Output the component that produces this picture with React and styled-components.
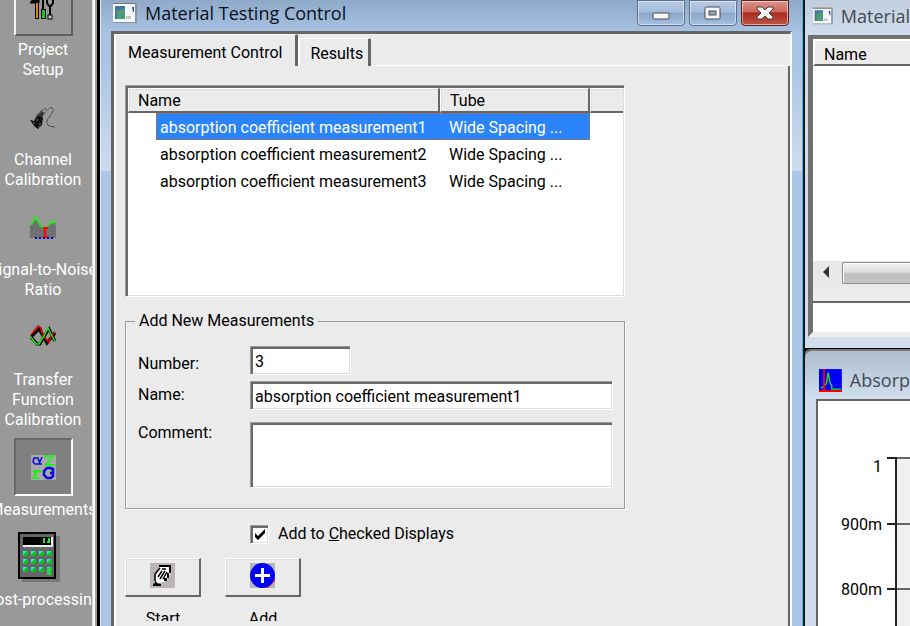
import React, { useState } from "react";
import styled, { createGlobalStyle, css } from "styled-components";

const Global = createGlobalStyle`
  * { box-sizing: border-box; }
  body { margin: 0; overflow: hidden; }
  body, button, input, textarea, table {
    font-family: Roboto, "Liberation Sans", sans-serif;
    font-size: 16px;
    line-height: 20px;
    color: #000;
  }
`;

const sunken = css`
  border: 1px solid;
  border-color: #9a9a9a #fff #fff #9a9a9a;
  box-shadow: inset 2px 2px 0 #696969, inset -1px -1px 0 #dedede;
`;

const Desktop = styled.div`
  display: grid;
  grid-template-columns: 100px minmax(0, 47fr) minmax(0, 7fr);
  height: 100vh;
  overflow: hidden;
  background: #000;
`;

/* Navigation bar */
const Sidebar = styled.nav`
  display: flex;
  flex-direction: column;
  gap: 8px;
  min-height: 0;
  overflow: hidden;
  background: #999;
  border: solid transparent;
  border-width: 0 8px 0 0;
  border-image: linear-gradient(to left, #000 0 3px, #a0a0a0 3px 5px, #fff 5px 7px, #d8d8d8 7px) 0 8 0 0;
`;

const NavItem = styled.button`
  display: flex;
  flex: none;
  flex-direction: column;
  align-items: center;
  gap: 4px;
  width: 86px;
  padding: 0;
  border: 0;
  background: none;
  color: #fff;
  &:first-child { margin-top: -22px; }
`;

const NavIcon = styled.span`
  display: grid;
  place-items: center;
  width: 59px;
  height: 58px;
  border: 2px solid transparent;
  ${(p) => p.$state === "raised" && css`
    border-color: #f4f4f4 #606060 #606060 #f4f4f4;
  `}
  ${(p) => p.$state === "pressed" && css`
    background: #808080;
    border-color: #686868 #fafafa #fafafa #686868;
  `}
`;

const NavLabel = styled.span`
  white-space: pre;
  text-align: center;
`;

/* Windows */
const MainWindow = styled.section`
  display: flex;
  flex-direction: column;
  min-width: 0;
  min-height: 0;
  padding: 0 11px 0 10px;
  border-left: 1px solid #dfe9f5;
  border-right: 2px solid #111;
  box-shadow: inset -1px 0 0 #25c4ec;
  background: linear-gradient(#8fa9c8 0, #a9c4e4 34px, #a9c4e4 60px, #cddcee 170px, #abc6e7 172px);
`;

const TitleBar = styled.header`
  display: flex;
  flex: none;
  align-items: center;
  gap: 8px;
  height: ${(p) => p.$height}px;
  padding: ${(p) => p.$pad};
  overflow: hidden;
`;

const Title = styled.h1`
  flex: 1;
  margin: 0;
  font: 400 18px/24px "Open Sans", "Noto Sans", sans-serif;
  color: ${(p) => (p.$inactive ? "#444a52" : "#0b1020")};
  white-space: nowrap;
`;

const CaptionButtons = styled.div`
  display: flex;
  align-self: flex-start;
  gap: 4px;
`;

const CaptionButton = styled.button`
  display: grid;
  place-items: center;
  width: 48px;
  height: 26px;
  padding: 0;
  border: 1px solid ${(p) => (p.$close ? "#5c2020" : "#5b6f8c")};
  border-radius: 0 0 4px 4px;
  box-shadow: inset 0 0 0 1px rgba(255, 255, 255, 0.5);
  background: ${(p) => p.$close
    ? "linear-gradient(#dc958c 0, #cb665a 45%, #a82c1d 50%, #bd5547 100%)"
    : "linear-gradient(#b6c9e0 0, #a5bddb 45%, #8aa7cb 50%, #a5c0e0 100%)"};
`;

const Client = styled.div`
  display: flex;
  flex: 1;
  flex-direction: column;
  min-height: 0;
  overflow: hidden;
  background: #ebebeb;
  border: solid;
  border-width: 3px 2px 0 3px;
  border-color: #666 #fff #fff #666;
`;

const Tabs = styled.div`
  display: flex;
  flex: none;
  align-items: flex-end;
  height: 32px;
`;

const Tab = styled.button`
  align-self: ${(p) => (p.$active ? "stretch" : "flex-end")};
  height: ${(p) => (p.$active ? "auto" : "28px")};
  padding: ${(p) => (p.$active ? "4px 13px 0 12px" : "2px 5px 0 10px")};
  border: solid;
  border-width: 1px 3px 0 2px;
  border-color: #fff #666 #fff #fff;
  border-radius: 2px 2px 0 0;
  background: #ebebeb;
`;

const TabRule = styled.span`
  flex: 1;
  height: 1px;
  background: #fff;
`;

const TabPage = styled.div`
  display: flex;
  flex: 1;
  flex-direction: column;
  align-items: flex-start;
  min-height: 0;
  padding: 19px 16px 0 9px;
  border-left: 2px solid #fff;
  border-right: 2px solid #666;
`;

const ListBox = styled.div`
  ${sunken}
  width: 500px;
  max-width: 100%;
  height: 212px;
  flex: none;
  padding: 2px 1px 1px 2px;
  background: #fff;
`;

const Table = styled.table`
  width: 100%;
  table-layout: fixed;
  border-collapse: separate;
  border-spacing: 0;
`;

const NameCol = styled.col` width: 312px; `;
const TubeCol = styled.col` width: 150px; `;

const HeadCell = styled.th`
  height: 25px;
  padding: 1px 9px 0;
  text-align: left;
  font-weight: 400;
  background: #ebebeb;
  border: solid;
  border-width: 1px 2px 2px 1px;
  border-color: #fff #666 #666 #fff;
  box-shadow: inset 1px 1px 0 #ddd;
  &:last-child { border-right: 0; }
`;

const Cell = styled.td`
  height: 27px;
  padding: 0;
  white-space: nowrap;
`;

const NameText = styled.div`
  margin-left: 28px;
  padding: 4px 3px 1px;
  border: 1px dotted transparent;
  border-right: 0;
  ${(p) => p.$selected && css`
    color: #fff;
    background: #2c84fb;
    border-color: #c9641c;
  `}
`;

const TubeText = styled(NameText)`
  margin-left: 0;
  padding-left: 9px;
  border-left: 0;
  border-right: 1px dotted ${(p) => (p.$selected ? "#c9641c" : "transparent")};
`;

const Group = styled.fieldset`
  display: grid;
  grid-template-columns: 112px minmax(0, 1fr);
  align-items: start;
  row-gap: 6px;
  width: 500px;
  max-width: 100%;
  min-width: 0;
  flex: none;
  margin: 14px 0 0;
  padding: 15px 11px 20px 12px;
  border: 1px solid #999;
  box-shadow: inset 1px 0 0 #fff, 1px 1px 0 #fff;
`;

const Legend = styled.legend`
  margin-left: -3px;
  padding: 0 4px;
`;

const FieldLabel = styled.label`
  padding-top: ${(p) => p.$top}px;
`;

const TextInput = styled.input`
  ${sunken}
  width: ${(p) => (p.$short ? "101px" : "100%")};
  height: 29px;
  padding: 2px 4px 0;
  background: #fff;
  border-radius: 0;
  outline: none;
`;

const TextArea = styled.textarea`
  ${sunken}
  display: block;
  width: 100%;
  height: 66px;
  margin-top: 6px;
  padding: 4px;
  background: #fff;
  resize: none;
  outline: none;
`;

const CheckRow = styled.label`
  display: flex;
  flex: none;
  align-items: center;
  gap: 9px;
  margin: 15px 0 0 125px;
`;

const CheckBox = styled.input`
  ${sunken}
  appearance: none;
  display: grid;
  place-items: center;
  width: 19px;
  height: 19px;
  margin: 0;
  background: #fff;
  &:checked {
    background: #fff url("data:image/svg+xml,%3Csvg xmlns='http://www.w3.org/2000/svg' viewBox='0 0 19 19'%3E%3Cpath d='M5 8v4l3 3 7-7V4l-7 7z'/%3E%3C/svg%3E") center / 19px no-repeat;
  }
`;

const Actions = styled.div`
  display: flex;
  flex: none;
  gap: 24px;
  margin-top: 14px;
`;

const Action = styled.div`
  width: 76px;
  text-align: center;
`;

const ActionButton = styled.button`
  display: grid;
  place-items: center;
  width: 100%;
  height: 39px;
  padding: 0 0 3px;
  background: #ebebeb;
  border: solid;
  border-width: 1px 2px 2px 1px;
  border-color: #fff #666 #666 #fff;
  box-shadow: inset 1px 1px 0 #ddd;
`;

const ActionLabel = styled.div`
  height: 12px;
  margin-top: 12px;
  overflow: hidden;
`;

/* Right-hand windows */
const RightColumn = styled.div`
  display: flex;
  flex-direction: column;
  min-width: 0;
  min-height: 0;
  overflow: hidden;
`;

const DataWindow = styled.section`
  display: flex;
  flex-direction: column;
  flex: none;
  height: 348px;
  padding: 0 0 11px 3px;
  background: linear-gradient(#c0cedd 0, #cfdded 36px);
`;

const DataClient = styled.div`
  display: flex;
  flex: 1;
  flex-direction: column;
  background: #ebebeb;
  border: solid;
  border-width: 4px 0 5px 5px;
  border-color: #707070 #eee #eee #707070;
`;

const DataHead = styled.div`
  height: 27px;
  padding: 4px 9px 0;
  border: solid;
  border-width: 2px 0 2px 2px;
  border-color: #fff #666 #666 #fff;
`;

const DataBody = styled.div`
  flex: 1;
  background: #fff;
`;

const ScrollBar = styled.div`
  display: flex;
  height: 26px;
  background: #e8e8e8;
`;

const ScrollArrow = styled.button`
  display: grid;
  place-items: center;
  width: 29px;
  padding: 0 4px 4px 0;
  border: 0;
  background: none;
`;

const ScrollThumb = styled.div`
  flex: 1;
  margin: 1px 0 3px;
  border: 1px solid #8b8b8b;
  border-right: 0;
  border-radius: 2px 0 0 2px;
  box-shadow: inset 1px 1px 0 #fff;
  background: linear-gradient(#f4f4f4 0, #dedede 45%, #bfbfbf 55%, #c4c4c4 100%);
`;

const StatusInput = styled.input`
  width: 100%;
  height: 31px;
  margin-top: 14px;
  padding: 0 4px;
  border: 0;
  border-top: 2px solid #666;
  background: #fff;
`;

const PlotWindow = styled.section`
  display: flex;
  flex: 1;
  flex-direction: column;
  min-height: 0;
  margin-top: 3px;
  padding-left: 11px;
  border-radius: 6px 0 0 0;
  box-shadow: 0 0 0 2px #777;
  background: linear-gradient(#aebdcf 0, #cfdded 46px);
`;

const PlotClient = styled.div`
  flex: 1;
  min-height: 0;
  overflow: hidden;
  background: #fff;
  border: solid #666;
  border-width: 2px 0 0 2px;
`;

const AppIcon = () => (
  <svg width="24" height="20" viewBox="0 0 24 20" aria-hidden="true">
    <rect width="24" height="20" fill="#8b939b" />
    <rect y="1" width="22" height="18" fill="#f6f7f8" />
    <rect width="22" height="1" fill="#777" />
    <rect x="2" y="3" width="10" height="13" fill="#4676a0" />
    <path d="M4 14V8l8-3v11H4z" fill="#4d9d78" />
    <rect x="13" y="13" width="5" height="3" fill="#c4c8cc" />
    <path d="M19 4h2v5h-1z" fill="#28559b" />
  </svg>
);

const ToolsIcon = () => (
  <svg width="26" height="26" viewBox="0 0 26 26" aria-hidden="true">
    <path d="M0 9h9V5H3zM8 4v6" stroke="#000" fill="#000" />
    <rect x="5" y="9" width="4" height="16" fill="#000" />
    <rect x="6" y="9" width="2" height="15" fill="#d58b16" />
    <path d="M13 0v15" stroke="#000" strokeWidth="2" />
    <rect x="11" y="15" width="5" height="10" fill="#000" />
    <rect x="12" y="16" width="3" height="8" fill="#19c719" />
    <path d="M17 5v4l2 3h2l2-3V5M20 11v12" stroke="#000" strokeWidth="2" fill="none" />
    <rect x="18" y="21" width="4" height="4" fill="#ccc" stroke="#000" />
  </svg>
);

const MicIcon = () => (
  <svg width="26" height="26" viewBox="0 -3 26 26" aria-hidden="true">
    <path d="M0 13l4 1 2-4 4-3 3 4-1 7-4 4-3-2-3-4z" fill="#111" />
    <path d="M3 16h2m1-3h2m1 4h2m-3 3h2" stroke="#777" />
    <path d="M6 9l5-5 5-3M13 8c4-5 6-8 9-7s0 5-2 8c-4 5-4 8-1 10l6 1" fill="none" stroke="#444" strokeDasharray="4 1" />
    <path d="M8 8l4-4 2 2-2 5z" fill="#333" />
  </svg>
);

const NoiseIcon = () => (
  <svg width="26" height="26" viewBox="0 -1 26 26" aria-hidden="true">
    <path d="M0 9h2l4-5 5 6 4 3 4-4 2-1h5v15H0z" fill="#707070" />
    <path d="M0 9h2l1-3 2-1V1l3 6 2 1v3l3 1v1h4l1-3 3-2 1-3v3l4-1v3" fill="none" stroke="#23ef16" strokeWidth="1.5" />
    <path d="M13 13h5M15 13v9M13 22h5" stroke="#f00" strokeWidth="2" />
    <path d="M5 23h20" stroke="#0000d0" strokeWidth="2" strokeDasharray="2 2" />
  </svg>
);

const TransferIcon = () => (
  <svg width="26" height="26" viewBox="0 0 26 26" aria-hidden="true">
    <g fill="none" strokeWidth="3">
      <path d="M1 13l8-8 3 5 5 9 8-10" stroke="#000" />
      <path d="M1 13l6 7h3l5-9 4-6 6 12" stroke="#000" />
    </g>
    <g fill="none" strokeWidth="1.5">
      <path d="M1 11l7-9 3 2 2 8 6 6 2-6 4-4" stroke="#e00000" />
      <path d="M0 12l6 8h3l5-8 4-8 3 6 4 7" stroke="#20e320" />
    </g>
  </svg>
);

const SymbolsIcon = () => (
  <svg width="25" height="25" viewBox="0 0 25 25" aria-hidden="true">
    <rect width="25" height="25" fill="#a9a9a9" />
    <g fill="none" strokeWidth="2">
      <path d="M11 2L8 9H4L2 7l1-4h4l2 6h2" stroke="#0b0bdc" strokeWidth="1.5" />
      <path d="M14 3V1h8l-7 9h8V9" stroke="#24ed20" />
      <path d="M2 16h2v7M1 23h7M5 18l1-2h3v2" stroke="#24ed20" strokeWidth="2" />
      <path d="M22 17v-3l-3-1h-3l-3 3v4l3 3h4l2-2v-3h-3" stroke="#0b0bdc" strokeWidth="2.5" />
    </g>
  </svg>
);

const CalculatorIcon = () => (
  <svg width="50" height="50" viewBox="0 0 50 50" aria-hidden="true">
    <rect x="4" y="4" width="38" height="46" fill="#777" />
    <rect x="1" y="1" width="36" height="45" fill="#666" stroke="#000" strokeWidth="2" />
    <rect x="5" y="5" width="30" height="10" fill="#eee" />
    <rect x="5" y="5" width="28" height="8" fill="#000" />
    <path d="M26 6v5M29 10h2V6" stroke="#2be52b" strokeWidth="2" fill="none" />
    {[19, 27, 35].map((y) =>
      [5, 13, 21, 29].map((x) => (
        <g key={`${x}-${y}`}>
          <rect x={x} y={y} width="5" height="5" fill="#12bd20" />
          <path d={`M${x} ${y}h4l-4 4z`} fill="#30e5e5" />
        </g>
      ))
    )}
    <rect x="29" y="36" width="4" height="7" fill="#20d840" />
  </svg>
);

const MinimizeGlyph = () => (
  <svg width="18" height="16" viewBox="0 0 18 16" aria-hidden="true">
    <rect x="1" y="8" width="16" height="6" rx="1" fill="#f5f5f5" stroke="#4a4f5a" />
  </svg>
);

const MaximizeGlyph = () => (
  <svg width="18" height="16" viewBox="0 0 18 16" aria-hidden="true">
    <rect x="1" y="2" width="15" height="12" rx="1" fill="#f5f5f5" stroke="#4a4f5a" />
    <rect x="5" y="6" width="7" height="4" fill="#8fa9c9" stroke="#4a4f5a" />
  </svg>
);

const CloseGlyph = () => (
  <svg width="18" height="16" viewBox="0 0 18 16" aria-hidden="true">
    <path d="M1 2h5l3 3 3-3h5v2l-4 4 4 4v2h-5l-3-3-3 3H1v-2l4-4-4-4z" fill="#f5f5f5" stroke="#54383a" />
  </svg>
);

const HandIcon = () => (
  <svg width="25" height="25" viewBox="0 0 25 25" aria-hidden="true">
    <rect width="25" height="25" fill="#bab3b8" />
    <path d="M10 4h11v4l-2 6-3 4-4 1-3 2-4-3 1-8z" fill="#fff" />
    <path d="M9 2h12v2H9zM19 4h2v6h-2zM17 10h2v5h-2zM14 15h3v3h-3z" />
    <path d="M10 5L5 11v7M12 8l-4 6M15 8l-5 8M17 9l-4 7M12 6h4" fill="none" stroke="#000" strokeWidth="1.5" />
    <path d="M5 17l2 3 4 1v2H3v-2l2-1z" />
  </svg>
);

const AddIcon = () => (
  <svg width="25" height="25" viewBox="0 0 25 25" aria-hidden="true">
    <rect width="25" height="25" fill="#b5b5b9" />
    <path d="M15 25l10-10v3l-7 7z" fill="#f33" />
    <circle cx="12.5" cy="12.5" r="12.5" fill="#0000f5" />
    <path d="M12.5 5v15M5 12.5h15" stroke="#fff" strokeWidth="3" />
  </svg>
);

const PlotIcon = () => (
  <svg width="25" height="25" viewBox="0 0 25 25" aria-hidden="true">
    <rect width="25" height="25" fill="#0000f8" />
    <path d="M2 21l3-2 3-3 2-12 2 11 2 3v4h10" fill="none" stroke="#1fe81f" strokeWidth="1.5" />
    <path d="M5.5 0v24M0 24h25" stroke="#f00" strokeWidth="2" />
  </svg>
);

const LeftArrow = () => (
  <svg width="8" height="12" viewBox="0 0 8 12" aria-hidden="true">
    <path d="M7 0v12L1 6z" fill="#333" />
  </svg>
);

const AxisSvg = styled.svg`
  display: block;
  width: 100%;
  height: 100%;
`;

const AxisText = styled.text`
  font: 16px Roboto, sans-serif;
  text-anchor: end;
`;

const ticks = ["1", "900m", "800m", "700m"];

const Axis = () => (
  <AxisSvg role="img" aria-label="Absorption axis">
    <rect x="79" y="57" width="100%" height="100%" fill="#f0f0f0" />
    {ticks.map((label, i) => (
      <g key={label}>
        <path d={`M79 ${57 + Math.round(i * 65.5)}h2000`} stroke="#666" strokeWidth="2" />
        <path d={`M69 ${57 + Math.round(i * 65.5)}h10`} stroke="#222" strokeWidth="2" />
        <AxisText x="64" y={(i ? 63 : 71) + Math.round(i * 65.5)}>{label}</AxisText>
      </g>
    ))}
    <path d="M78 57v2000" stroke="#222" strokeWidth="2" />
  </AxisSvg>
);

const navItems = [
  { label: "Project\nSetup", icon: <ToolsIcon />, state: "raised" },
  { label: "Channel\nCalibration", icon: <MicIcon /> },
  { label: "Signal-to-Noise\nRatio", icon: <NoiseIcon /> },
  { label: "Transfer\nFunction\nCalibration", icon: <TransferIcon /> },
  { label: "Measurements", icon: <SymbolsIcon />, state: "pressed" },
  { label: "Post-processing", icon: <CalculatorIcon /> },
];

const rows = [1, 2, 3].map((n) => `absorption coefficient measurement${n}`);

export default function App() {
  const [selected, setSelected] = useState(0);
  return (
    <>
      <Global />
      <Desktop>
        <Sidebar>
          {navItems.map((item) => (
            <NavItem key={item.label} type="button">
              <NavIcon $state={item.state}>{item.icon}</NavIcon>
              <NavLabel>{item.label}</NavLabel>
            </NavItem>
          ))}
        </Sidebar>

        <MainWindow>
          <TitleBar $height={31} $pad="0 3px 6px 2px">
            <AppIcon />
            <Title>Material Testing Control</Title>
            <CaptionButtons>
              <CaptionButton type="button" aria-label="Minimize"><MinimizeGlyph /></CaptionButton>
              <CaptionButton type="button" aria-label="Maximize"><MaximizeGlyph /></CaptionButton>
              <CaptionButton type="button" aria-label="Close" $close><CloseGlyph /></CaptionButton>
            </CaptionButtons>
          </TitleBar>
          <Client>
            <Tabs role="tablist">
              <Tab type="button" role="tab" aria-selected="true" $active>Measurement Control</Tab>
              <Tab type="button" role="tab" aria-selected="false">Results</Tab>
              <TabRule />
            </Tabs>
            <TabPage>
              <ListBox>
                <Table>
                  <colgroup><NameCol /><TubeCol /><col /></colgroup>
                  <thead>
                    <tr>
                      <HeadCell>Name</HeadCell>
                      <HeadCell>Tube</HeadCell>
                      <HeadCell />
                    </tr>
                  </thead>
                  <tbody>
                    {rows.map((name, i) => (
                      <tr key={name} onClick={() => setSelected(i)}>
                        <Cell><NameText $selected={i === selected}>{name}</NameText></Cell>
                        <Cell><TubeText $selected={i === selected}>Wide Spacing ...</TubeText></Cell>
                        <Cell />
                      </tr>
                    ))}
                  </tbody>
                </Table>
              </ListBox>
              <Group>
                <Legend>Add New Measurements</Legend>
                <FieldLabel htmlFor="number" $top={8}>Number:</FieldLabel>
                <TextInput id="number" $short defaultValue="3" />
                <FieldLabel htmlFor="name" $top={4}>Name:</FieldLabel>
                <TextInput id="name" defaultValue={rows[0]} />
                <FieldLabel htmlFor="comment" $top={7}>Comment:</FieldLabel>
                <TextArea id="comment" />
              </Group>
              <CheckRow>
                <CheckBox type="checkbox" defaultChecked />
                <span>Add to <u>C</u>hecked Displays</span>
              </CheckRow>
              <Actions>
                <Action>
                  <ActionButton type="button" aria-labelledby="start-label"><HandIcon /></ActionButton>
                  <ActionLabel id="start-label">Start</ActionLabel>
                </Action>
                <Action>
                  <ActionButton type="button" aria-labelledby="add-label"><AddIcon /></ActionButton>
                  <ActionLabel id="add-label">Add</ActionLabel>
                </Action>
              </Actions>
            </TabPage>
          </Client>
        </MainWindow>

        <RightColumn>
          <DataWindow>
            <TitleBar $height={35} $pad="0 0 4px 5px">
              <AppIcon />
              <Title $inactive>Material</Title>
            </TitleBar>
            <DataClient>
              <DataHead>Name</DataHead>
              <DataBody />
              <ScrollBar>
                <ScrollArrow type="button" aria-label="Scroll left"><LeftArrow /></ScrollArrow>
                <ScrollThumb />
              </ScrollBar>
              <StatusInput aria-label="Status" readOnly />
            </DataClient>
          </DataWindow>
          <PlotWindow>
            <TitleBar $height={48} $pad="10px 0 0 3px">
              <PlotIcon />
              <Title $inactive>Absorp</Title>
            </TitleBar>
            <PlotClient><Axis /></PlotClient>
          </PlotWindow>
        </RightColumn>
      </Desktop>
    </>
  );
}
